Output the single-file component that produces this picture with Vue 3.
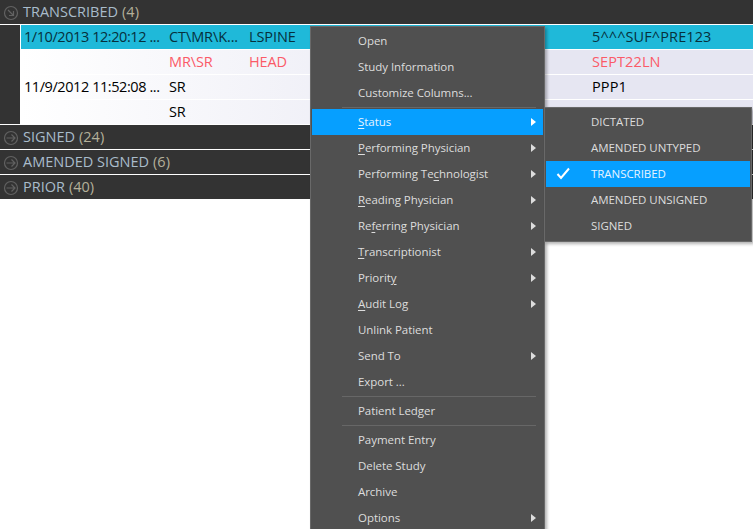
<script setup>
const groups = [
  { name: 'TRANSCRIBED', count: 4, open: true },
  { name: 'SIGNED', count: 24 },
  { name: 'AMENDED SIGNED', count: 6 },
  { name: 'PRIOR', count: 40 },
]
const rows = [
  { cls: 'sel', date: '1/10/2013 12:20:12 ...', mod: 'CT\\MR\\K...', body: 'LSPINE', acc: '5^^^SUF^PRE123' },
  { cls: 'red', date: '', mod: 'MR\\SR', body: 'HEAD', acc: 'SEPT22LN' },
  { cls: '', date: '11/9/2012 11:52:08 ...', mod: 'SR', body: '', acc: 'PPP1' },
  { cls: '', date: '', mod: 'SR', body: '', acc: '' },
]
const menu = [
  { pre: '', u: '', post: 'Open' },
  { pre: '', u: '', post: 'Study Information' },
  { pre: '', u: '', post: 'Customize Columns...', sep: true },
  { pre: '', u: 'S', post: 'tatus', sub: true, active: true },
  { pre: '', u: 'P', post: 'erforming Physician', sub: true },
  { pre: 'Performing Te', u: 'c', post: 'hnologist', sub: true },
  { pre: '', u: 'R', post: 'eading Physician', sub: true },
  { pre: 'Re', u: 'f', post: 'erring Physician', sub: true },
  { pre: '', u: 'T', post: 'ranscriptionist', sub: true },
  { pre: 'Priorit', u: 'y', post: '', sub: true },
  { pre: '', u: 'A', post: 'udit Log', sub: true },
  { pre: '', u: '', post: 'Unlink Patient' },
  { pre: '', u: '', post: 'Send To', sub: true },
  { pre: '', u: '', post: 'Export ...', sep: true },
  { pre: '', u: '', post: 'Patient Ledger', sep: true },
  { pre: '', u: '', post: 'Payment Entry' },
  { pre: '', u: '', post: 'Delete Study' },
  { pre: '', u: '', post: 'Archive' },
  { pre: '', u: '', post: 'Options', sub: true },
]
const status = ['DICTATED', 'AMENDED UNTYPED', 'TRANSCRIBED', 'AMENDED UNSIGNED', 'SIGNED']
</script>

<template>
  <div class="page">
    <section v-for="g in groups" :key="g.name" class="group">
      <header class="head">
        <svg class="gi" width="16" height="16" viewBox="0 0 16 16" fill="none" stroke="#626262">
          <circle cx="8" cy="8" r="6.5" stroke-width="1.2" />
          <path v-if="g.open" d="M5 5l5.5 5.5M10.5 6v4.5H6" stroke-width="1.2" />
          <path v-else d="M3.5 8h8.5M8.5 4.5L12 8l-3.5 3.5" stroke-width="1.2" />
        </svg>
        <span class="gt">{{ g.name }}</span>
        <span class="gc">({{ g.count }})</span>
      </header>
      <div v-if="g.open" class="rows">
        <div class="rows-inner">
          <div v-for="(r, i) in rows" :key="i" class="row" :class="r.cls">
            <span class="c1">{{ r.date }}</span>
            <span class="c2">{{ r.mod }}</span>
            <span class="c3">{{ r.body }}</span>
            <span class="c4">{{ r.acc }}</span>
          </div>
        </div>
      </div>
    </section>

    <nav class="menu main">
      <template v-for="m in menu" :key="m.pre + m.u + m.post">
        <div class="item" :class="{ active: m.active }">
          <span class="label">{{ m.pre }}<u v-if="m.u">{{ m.u }}</u>{{ m.post }}</span>
          <i v-if="m.sub" class="arrow"></i>
        </div>
        <div v-if="m.sep" class="sep"></div>
      </template>
    </nav>

    <nav class="menu side">
      <div v-for="s in status" :key="s" class="item" :class="{ active: s === 'TRANSCRIBED' }">
        <svg v-if="s === 'TRANSCRIBED'" class="check" width="15" height="13" viewBox="0 0 15 13" fill="none" stroke="#fff" stroke-width="2">
          <path d="M1.5 7l3.5 4L13 1.5" />
        </svg>
        <span class="label">{{ s }}</span>
      </div>
    </nav>
  </div>
</template>

<style>
html, body { margin: 0; background: #fff; overflow: hidden; }
</style>

<style scoped>
.page {
  position: relative;
  width: 753px;
  height: 529px;
  overflow: hidden;
  background: #fff;
  font-family: "Open Sans", "Noto Sans", sans-serif;
}
.head {
  height: 23px;
  padding-bottom: 1px;
  border-bottom: 1px solid #fff;
  background: #333;
  display: flex;
  align-items: center;
  padding-left: 3px;
  font-size: 14.5px;
  color: #a9bccb;
}
.gi { margin-right: 4px; flex: none; position: relative; top: 1px; }
.gt { margin-right: 4px; }
.gc { color: #b4b09a; }
.rows {
  background: #333;
  padding-left: 20px;
  border-bottom: 1px solid #fff;
}
.rows-inner {
  border-left: 1px solid #fff;
}
.row {
  height: 23px;
  padding-bottom: 1px;
  border-bottom: 1px solid #fff;
  display: grid;
  grid-template-columns: 145px 80px 343px 1fr;
  align-items: center;
  padding-left: 3px;
  background: linear-gradient(90deg, #fff, #e6e6f2 70%);
  font-size: 14.5px;
  letter-spacing: -0.1px;
  color: #000;
  white-space: nowrap;
}
.row:last-child { border-bottom: 0; }
.row.sel { background: #1fb9d9; color: #06303c; }
.row.red { color: #fb5a68; }
.c1 { letter-spacing: -0.43px; }
.c4 { grid-column: 4; letter-spacing: 0.1px; }
.menu {
  position: absolute;
  box-sizing: border-box;
  background: #505050;
  border: 1px solid #696969;
  padding: 1px;
  font-size: 11.5px;
  letter-spacing: -0.05px;
  color: #ddd;
  box-shadow: 2px 2px 3px rgba(0, 0, 0, 0.3);
}
.main {
  left: 310px;
  top: 26px;
  width: 235px;
  height: 520px;
}
.side {
  left: 544px;
  top: 107px;
  width: 208px;
  height: 135px;
}
.item {
  position: relative;
  box-sizing: border-box;
  height: 26px;
  padding-bottom: 2px;
  display: flex;
  align-items: center;
  padding-left: 46px;
}
.side .item { padding-left: 45px; }
.item.active { background: #069fff; color: #e6f4ff; }
.arrow {
  position: absolute;
  right: 7px;
  top: 9px;
  width: 0;
  height: 0;
  border-left: 5px solid #ddd;
  border-top: 4px solid transparent;
  border-bottom: 4px solid transparent;
}
.active .arrow { border-left-color: #fff; }
.sep {
  height: 1px;
  margin: 1px 7px 1px 30px;
  background: #676767;
}
.check {
  position: absolute;
  left: 10px;
  top: 6px;
}
u { text-underline-offset: 2px; }
</style>
